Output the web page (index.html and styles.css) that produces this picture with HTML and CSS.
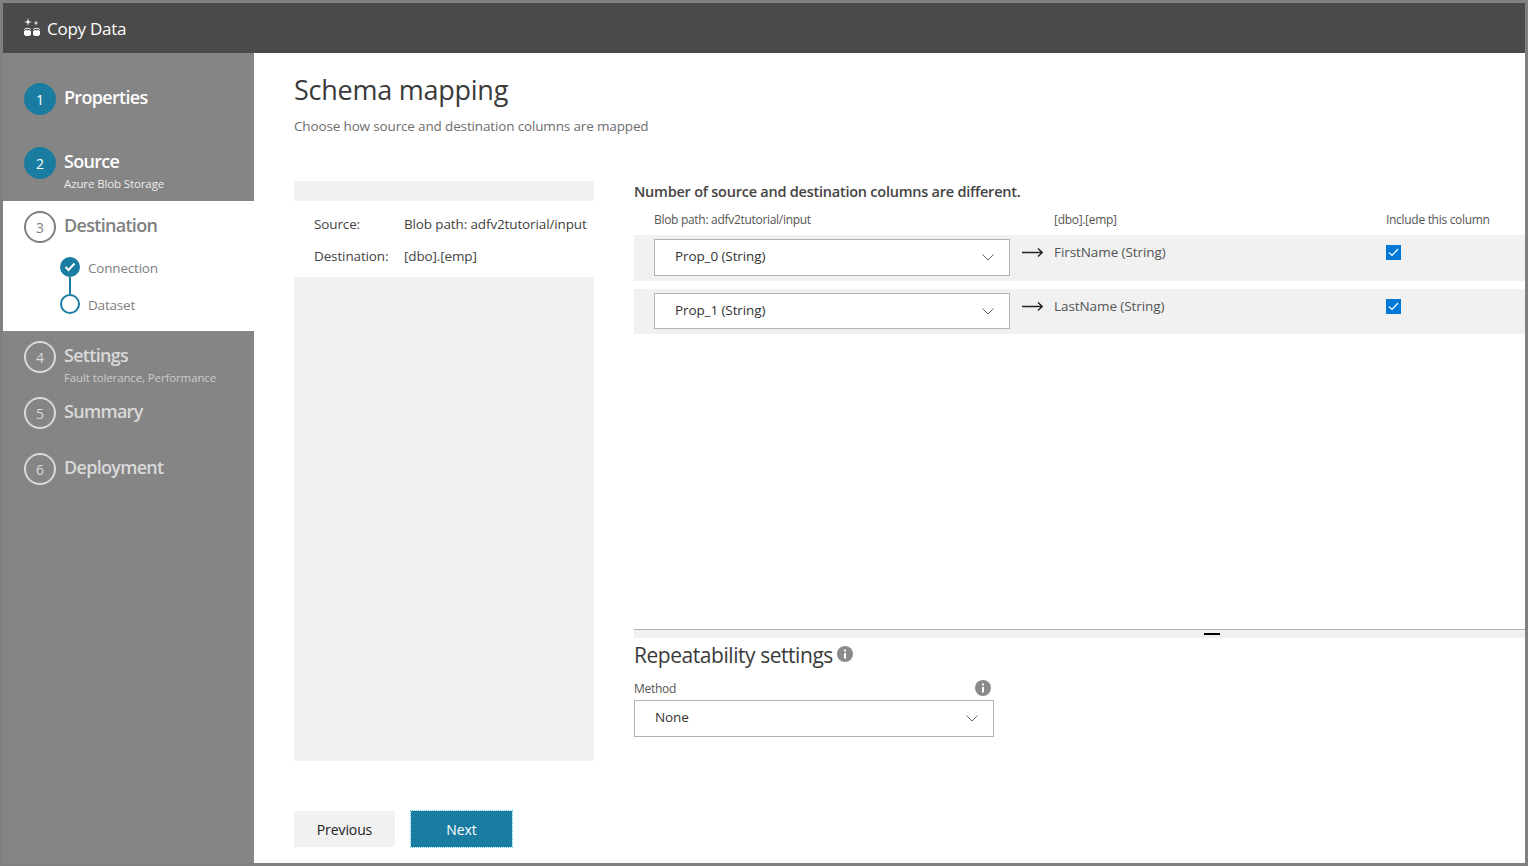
FILE: index.html
```html
<!DOCTYPE html>
<html lang="en">
  <head>
    <meta charset="UTF-8" />
    <meta name="viewport" content="width=device-width, initial-scale=1.0" />
    <title>Copy Data</title>
    <link rel="stylesheet" href="styles.css">
  </head>
  <body>
    <div class="frame">
      <header class="topbar">
        <svg class="topbar-icon" width="16" height="18" viewBox="0 0 16 18" fill="#fff">
          <path d="M4 0l.8 3.200L8 4l-3.200.8L4 8l-.8-3.200L0 4l3.200-.8z"/>
          <path d="M12 2.500l.6 1.900 1.900.6-1.900.6-.6 1.900-.6-1.900L9.500 5l1.900-.6z"/>
          <path d="M0 13h7v3.500C7 17.400 5.500 18 3.500 18S0 17.400 0 16.500z"/>
          <path d="M9 13h7v3.500c0 .9-1.500 1.500-3.500 1.500S9 17.400 9 16.500z"/>
          <ellipse cx="3.500" cy="11.500" rx="3" ry="1.200" fill="none" stroke="#fff"/>
          <ellipse cx="12.500" cy="11.500" rx="3" ry="1.200" fill="none" stroke="#fff"/>
        </svg>
        <span>Copy Data</span>
      </header>

      <div class="content">
        <nav class="sidebar">
          <div class="step step-tall">
            <div class="step-num step-num-done">1</div>
            <div class="step-text"><div class="step-title">Properties</div></div>
          </div>
          <div class="step step-tall">
            <div class="step-num step-num-done">2</div>
            <div class="step-text">
              <div class="step-title">Source</div>
              <div class="step-sub">Azure Blob Storage</div>
            </div>
          </div>
          <div class="current">
            <div class="current-head">
              <div class="step-num">3</div>
              <div class="step-text"><div class="step-title">Destination</div></div>
            </div>
            <div class="substeps">
              <div class="substep">
                <span class="dot dot-done">
                  <svg width="12" height="10" viewBox="0 0 12 10"><path d="M1.500 5l3 3 6-6.500" fill="none" stroke="#fff" stroke-width="2"/></svg>
                </span>
                <span class="substep-name">Connection</span>
              </div>
              <div class="substep-line"></div>
              <div class="substep">
                <span class="dot"></span>
                <span class="substep-name">Dataset</span>
              </div>
            </div>
          </div>
          <div class="step">
            <div class="step-num">4</div>
            <div class="step-text">
              <div class="step-title">Settings</div>
              <div class="step-sub">Fault tolerance, Performance</div>
            </div>
          </div>
          <div class="step">
            <div class="step-num">5</div>
            <div class="step-text"><div class="step-title">Summary</div></div>
          </div>
          <div class="step">
            <div class="step-num">6</div>
            <div class="step-text"><div class="step-title">Deployment</div></div>
          </div>
        </nav>

        <main class="main">
          <h1 class="page-title">Schema mapping</h1>
          <p class="page-sub">Choose how source and destination columns are mapped</p>

          <div class="columns">
            <aside class="summary">
              <div class="summary-strip"></div>
              <div class="summary-info">
                <div class="summary-row"><span class="summary-key">Source:</span><span>Blob path: adfv2tutorial/input</span></div>
                <div class="summary-row"><span class="summary-key">Destination:</span><span>[dbo].[emp]</span></div>
              </div>
              <div class="summary-fill"></div>
            </aside>

            <section class="mapping">
              <div class="mapping-top">
                <h2 class="warning">Number of source and destination columns are different.</h2>
                <div class="map-head">
                  <span class="col-source">Blob path: adfv2tutorial/input</span>
                  <span class="col-target">[dbo].[emp]</span>
                  <span>Include this column</span>
                </div>
                <div class="map-row">
                  <div class="select select-row">
                    <span>Prop_0 (String)</span>
                    <svg class="chevron" width="12" height="7" viewBox="0 0 12 7"><path d="M.5.5L6 6l5.500-5.500" fill="none" stroke="#666"/></svg>
                  </div>
                  <svg class="arrow" width="21" height="9" viewBox="0 0 21 9"><path d="M0 4.500h20M16 .5l4.300 4-4.300 4" fill="none" stroke="#222" stroke-width="1.400"/></svg>
                  <span class="target">FirstName (String)</span>
                  <span class="check">
                    <svg width="11" height="9" viewBox="0 0 11 9"><path d="M1 4.500l3 3L10 1" fill="none" stroke="#fff" stroke-width="1.200"/></svg>
                  </span>
                </div>
                <div class="map-row map-row-second">
                  <div class="select select-row">
                    <span>Prop_1 (String)</span>
                    <svg class="chevron" width="12" height="7" viewBox="0 0 12 7"><path d="M.5.5L6 6l5.500-5.500" fill="none" stroke="#666"/></svg>
                  </div>
                  <svg class="arrow" width="21" height="9" viewBox="0 0 21 9"><path d="M0 4.500h20M16 .5l4.300 4-4.300 4" fill="none" stroke="#222" stroke-width="1.400"/></svg>
                  <span class="target">LastName (String)</span>
                  <span class="check">
                    <svg width="11" height="9" viewBox="0 0 11 9"><path d="M1 4.500l3 3L10 1" fill="none" stroke="#fff" stroke-width="1.200"/></svg>
                  </span>
                </div>
              </div>

              <div class="splitter"><span class="splitter-handle"></span></div>

              <h2 class="repeat-title">
                Repeatability settings
                <svg class="info" width="16" height="16" viewBox="0 0 16 16"><circle cx="8" cy="8" r="8" fill="#8a8a8a"/><path d="M7 7h2v5.500H7zM7 3.500h2v2H7z" fill="#fff"/></svg>
              </h2>
              <div class="method-label">
                <span>Method</span>
                <svg class="info" width="16" height="16" viewBox="0 0 16 16"><circle cx="8" cy="8" r="8" fill="#8a8a8a"/><path d="M7 7h2v5.500H7zM7 3.500h2v2H7z" fill="#fff"/></svg>
              </div>
              <div class="select select-method">
                <span>None</span>
                <svg class="chevron" width="12" height="7" viewBox="0 0 12 7"><path d="M.5.5L6 6l5.500-5.500" fill="none" stroke="#666"/></svg>
              </div>
            </section>
          </div>

          <div class="actions">
            <button class="btn" type="button">Previous</button>
            <button class="btn btn-primary" type="button">Next</button>
          </div>
        </main>
      </div>
    </div>
  </body>
</html>
```

FILE: styles.css
```css
* {
  padding: 0;
  margin: 0;
  box-sizing: border-box;
}

body {
  font-family: "Open Sans", "Liberation Sans", sans-serif;
  font-size: 14px;
  color: #444;
  background-color: #fff;
  overflow: hidden;
}

.frame {
  width: 1528px;
  height: 866px;
  border: 3px solid #808080;
  display: flex;
  flex-direction: column;
}

.topbar {
  height: 50px;
  background-color: #4a4a4a;
  color: #fff;
  display: flex;
  align-items: center;
  gap: 7px;
  padding-left: 21px;
  font-size: 17px;
  letter-spacing: -0.25px;
}

.topbar-icon {
  margin-top: -2px;
}

.content {
  flex: 1;
  display: flex;
  min-height: 0;
}

/* left wizard steps */
.sidebar {
  width: 251px;
  background-color: #858585;
  padding-top: 20px;
  flex-shrink: 0;
}

.step {
  height: 56px;
  padding: 10px 0 0 21px;
  display: flex;
  gap: 8px;
  color: #d9d9d9;
}

.step-tall {
  height: 64px;
  color: #fff;
}

.step-num {
  width: 32px;
  height: 32px;
  border-radius: 50%;
  border: 2px solid currentColor;
  flex-shrink: 0;
  display: flex;
  align-items: center;
  justify-content: center;
  font-size: 14px;
}

.step-num-done {
  background-color: #1a7ca1;
  border-color: #1a7ca1;
}

.step-text {
  padding-top: 1px;
}

.step-title {
  font-size: 18px;
  font-weight: 600;
  line-height: 26px;
  letter-spacing: -0.7px;
}

.step-sub {
  font-size: 11.500px;
  line-height: 16px;
  margin-top: 2px;
  letter-spacing: -0.12px;
  opacity: 0.85;
}

.current {
  height: 130px;
  background-color: #fff;
  color: #808080;
  padding-top: 10px;
}

.current-head {
  display: flex;
  gap: 8px;
  padding-left: 21px;
}

.substeps {
  margin-top: 14px;
  padding-left: 57px;
  font-size: 13.500px;
  letter-spacing: -0.2px;
}

.substep {
  display: flex;
  align-items: center;
  gap: 8px;
  height: 20px;
}

.substep-name {
  padding-top: 2px;
}

.substep-line {
  width: 2px;
  height: 17px;
  margin-left: 9px;
  background-color: #1a7ca1;
}

.dot {
  width: 20px;
  height: 20px;
  border-radius: 50%;
  border: 2px solid #1a7ca1;
  display: flex;
  align-items: center;
  justify-content: center;
}

.dot-done {
  background-color: #1a7ca1;
}

/* main area */
.main {
  flex: 1;
  padding: 17px 0 0 40px;
  min-width: 0;
}

.page-title {
  font-size: 27px;
  font-weight: 400;
  line-height: 40px;
  color: #3a3a3a;
  letter-spacing: -0.25px;
}

.page-sub {
  margin-top: 6px;
  font-size: 13.500px;
  line-height: 20px;
  color: #6e6e6e;
  letter-spacing: -0.15px;
}

.columns {
  display: flex;
  gap: 40px;
  margin-top: 45px;
}

.summary {
  width: 300px;
  height: 580px;
  display: flex;
  flex-direction: column;
  flex-shrink: 0;
}

.summary-strip {
  height: 20px;
  background-color: #f1f1f1;
}

.summary-info {
  height: 76px;
  padding: 7px 0 0 20px;
  letter-spacing: -0.13px;
  font-size: 13.500px;
}

.summary-row {
  display: flex;
  height: 32px;
  align-items: center;
}

.summary-key {
  width: 90px;
}

.summary-fill {
  flex: 1;
  background-color: #f1f1f1;
}

.mapping {
  flex: 1;
  min-width: 0;
}

.mapping-top {
  height: 448px;
}

.warning {
  font-size: 14.500px;
  font-weight: 600;
  line-height: 22px;
  color: #444;
  letter-spacing: -0.24px;
}

.map-head {
  display: flex;
  height: 32px;
  align-items: center;
  font-size: 12px;
  letter-spacing: -0.3px;
  padding: 1px 0 0 20px;
  color: #555;
}

.col-source {
  width: 400px;
}

.col-target {
  width: 332px;
}

.map-row {
  height: 46px;
  background-color: #f1f1f1;
  display: flex;
  align-items: flex-start;
  padding: 4px 0 0 20px;
}

.map-row-second {
  height: 45px;
  margin-top: 8px;
}

.select {
  background-color: #fff;
  border: 1px solid #b3b3b3;
  display: flex;
  align-items: center;
  justify-content: space-between;
  padding: 0 15px 3px 20px;
  font-size: 13.500px;
  letter-spacing: -0.1px;
  color: #333;
}

.select-row {
  width: 356px;
  height: 37px;
  flex-shrink: 0;
}

.map-row-second .select-row {
  height: 36px;
}

.chevron {
  margin-top: 3px;
}

.arrow {
  margin: 9px 0 0 12px;
  flex-shrink: 0;
}

.target {
  width: 332px;
  margin-left: 11px;
  padding-top: 4px;
  font-size: 13.500px;
  letter-spacing: -0.08px;
  color: #555;
}

.check {
  width: 15px;
  height: 15px;
  margin-top: 6px;
  background-color: #0078d7;
  display: flex;
  align-items: center;
  justify-content: center;
}

.splitter {
  height: 9px;
  background-color: #f1f1f1;
  border-top: 1px solid #b0b0b0;
  display: flex;
  justify-content: center;
  padding: 3px 0 0 265px;
}

.splitter-handle {
  width: 16px;
  height: 2px;
  background-color: #000;
}

.repeat-title {
  margin-top: 1px;
  font-size: 21px;
  font-weight: 400;
  line-height: 32px;
  color: #3a3a3a;
  letter-spacing: -0.45px;
}

.repeat-title .info {
  margin-left: -1px;
  vertical-align: 1px;
}

.method-label {
  width: 360px;
  height: 29px;
  display: flex;
  justify-content: space-between;
  align-items: center;
  padding: 5px 3px 0 0;
  font-size: 12px;
  letter-spacing: -0.3px;
  color: #555;
}

.select-method {
  width: 360px;
  height: 37px;
}

.actions {
  display: flex;
  gap: 16px;
  margin-top: 50px;
}

.btn {
  width: 101px;
  height: 36px;
  border: none;
  background-color: #f1f1f1;
  font-family: inherit;
  font-size: 14px;
  letter-spacing: -0.1px;
  color: #222;
}

.btn-primary {
  background-color: #1a7ca1;
  color: #fff;
  outline: 1px dotted #5fd0e6;
}
```
